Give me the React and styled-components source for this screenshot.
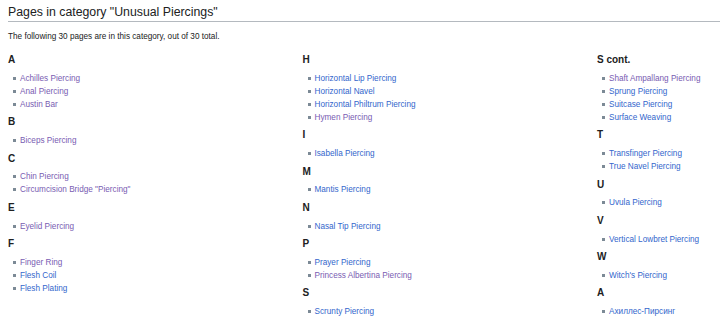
import React from 'react';
import styled, { createGlobalStyle } from 'styled-components';

const GlobalStyle = createGlobalStyle`
  html, body {
    margin: 0;
    padding: 0;
    background: #fff;
    overflow: hidden;
  }
  body {
    font-family: "Liberation Sans", Arial, sans-serif;
    color: #202122;
  }
`;

const Page = styled.div`
  padding: 0 0 0 8px;
  font-size: 8.2px;
`;

const Title = styled.h2`
  margin: 4px 0 0;
  padding: 0 0 1px;
  font-size: 12.3px;
  line-height: 16px;
  font-weight: normal;
  border-bottom: 1px solid #b4b9bf;
`;

const Intro = styled.p`
  margin: 7.5px 0 0;
  line-height: 13px;
`;

const Columns = styled.div`
  display: grid;
  grid-template-columns: 294.5px 294.5px 1fr;
  margin-top: 9.5px;
`;

const Column = styled.div`
  display: flex;
  flex-direction: column;
  min-width: 0;
`;

const Group = styled.div`
  margin-bottom: 3.4px;
`;

const Letter = styled.h3`
  margin: 0;
  font-size: 10px;
  line-height: 15.7px;
  font-weight: bold;
`;

const List = styled.ul`
  list-style: none;
  margin: 4px 0 0;
  padding: 0 0 0 12px;
`;

const Item = styled.li`
  position: relative;
  line-height: 13.1px;
  white-space: nowrap;

  &::before {
    content: '';
    position: absolute;
    left: -7px;
    top: 5px;
    width: 3px;
    height: 3px;
    background: #7c8a96;
  }
`;

const Link = styled.a`
  color: ${(p) => (p.$visited ? '#795cb2' : '#3366cc')};
  text-decoration: none;
`;

const columns = [
  [
    ['A', [['Achilles Piercing', 1], ['Anal Piercing', 1], ['Austin Bar', 1]]],
    ['B', [['Biceps Piercing', 1]]],
    ['C', [['Chin Piercing', 1], ['Circumcision Bridge "Piercing"', 1]]],
    ['E', [['Eyelid Piercing', 1]]],
    ['F', [['Finger Ring', 1], ['Flesh Coil', 0], ['Flesh Plating', 0]]],
  ],
  [
    ['H', [['Horizontal Lip Piercing', 0], ['Horizontal Navel', 0], ['Horizontal Philtrum Piercing', 0], ['Hymen Piercing', 1]]],
    ['I', [['Isabella Piercing', 0]]],
    ['M', [['Mantis Piercing', 0]]],
    ['N', [['Nasal Tip Piercing', 0]]],
    ['P', [['Prayer Piercing', 0], ['Princess Albertina Piercing', 1]]],
    ['S', [['Scrunty Piercing', 0]]],
  ],
  [
    ['S cont.', [['Shaft Ampallang Piercing', 1], ['Sprung Piercing', 0], ['Suitcase Piercing', 0], ['Surface Weaving', 0]]],
    ['T', [['Transfinger Piercing', 0], ['True Navel Piercing', 0]]],
    ['U', [['Uvula Piercing', 0]]],
    ['V', [['Vertical Lowbret Piercing', 0]]],
    ['W', [['Witch\'s Piercing', 0]]],
    ['A', [['Ахиллес-Пирсинг', 0]]],
  ],
];

export default function App() {
  return (
    <Page>
      <GlobalStyle />
      <Title>Pages in category "Unusual Piercings"</Title>
      <Intro>The following 30 pages are in this category, out of 30 total.</Intro>
      <Columns>
        {columns.map((groups, ci) => (
          <Column key={ci}>
            {groups.map(([letter, items]) => (
              <Group key={letter + ci}>
                <Letter>{letter}</Letter>
                <List>
                  {items.map(([name, visited]) => (
                    <Item key={name}>
                      <Link href="#" $visited={!!visited}>{name}</Link>
                    </Item>
                  ))}
                </List>
              </Group>
            ))}
          </Column>
        ))}
      </Columns>
    </Page>
  );
}
